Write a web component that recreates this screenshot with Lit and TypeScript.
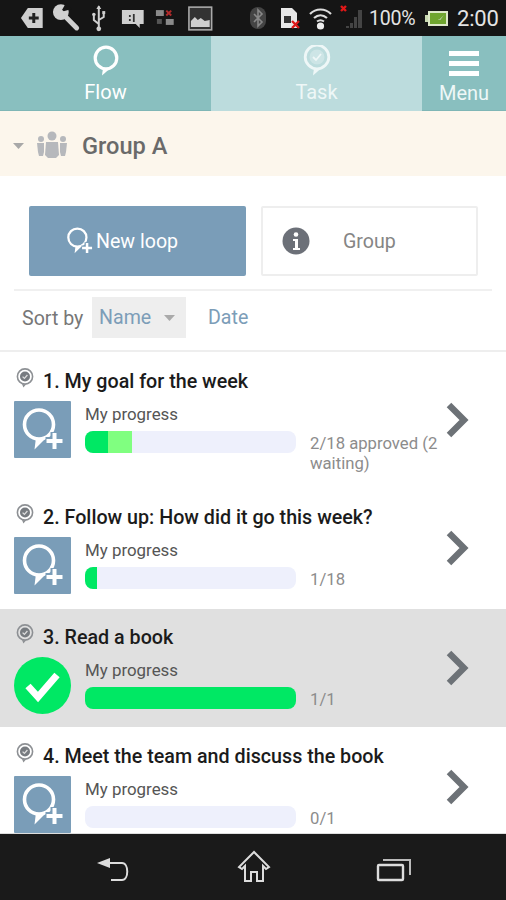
import { LitElement, html, css, svg } from "lit";
import { customElement } from "lit/decorators.js";

const bubble = svg`<circle cx="25" cy="23.500" r="14.500" fill="none" stroke="#fff" stroke-width="3.600"/><path d="M22 36.500 L31 38 L20.500 48.500 Z" fill="#fff"/>`;
const plus = svg`<path d="M40.500 31V49M31.500 40H49.500" stroke="#7a9db8" stroke-width="8"/><path d="M40.500 32V48M32.500 40H48.500" stroke="#fff" stroke-width="4"/>`;

const loopPlus = (cls: string) => html`<svg class=${cls} viewBox="7 5 46 48">${bubble}${plus}</svg>`;

const pin = html`<svg class="pin" viewBox="0 0 20 22"><circle cx="10" cy="9.5" r="7.6" fill="none" stroke="#8d9094" stroke-width="1.6"/><circle cx="10" cy="9.5" r="5" fill="#777b80"/><path d="M7.6 9.6l1.8 1.8 3-3.4" fill="none" stroke="#ddd" stroke-width="1.3"/><path d="M7 17l4 .5-2.6 3z" fill="#8d9094"/></svg>`;

const chevron = html`<svg class="chev" viewBox="0 0 24 36"><path d="M4 3 L19 18 L4 33" fill="none" stroke="#6d7277" stroke-width="6.4"/></svg>`;

interface Row { title: string; pct?: number; wait?: number; note: string; done?: boolean; cls?: string; }
const rows: Row[] = [
  { title: "1. My goal for the week", pct: 11, wait: 11.5, note: "2/18 approved (2 waiting)" },
  { title: "2. Follow up: How did it go this week?", pct: 5.6, note: "1/18" },
  { title: "3. Read a book", pct: 100, note: "1/1", done: true, cls: "sel" },
  { title: "4. Meet the team and discuss the book", pct: 0, note: "0/1", cls: "last" },
];

@customElement("app-root")
export class AppRoot extends LitElement {
  static styles = css`
    :host { display: block; width: 506px; height: 900px; font-family: Roboto, "Liberation Sans", sans-serif; background: #fff; overflow: hidden; }
    .page { display: flex; flex-direction: column; height: 900px; }
    .status { height: 36px; flex: none; background: #151515; display: flex; justify-content: space-between; align-items: center; }
    .sleft { display: flex; padding-left: 15px; }
    .sleft svg { width: 33.6px; height: 36px; display: block; }
    .sright { display: flex; align-items: center; padding-right: 8px; color: #e4e4e4; }
    .sright svg { display: block; height: 36px; width: 31px; }
    .pct { font-size: 19.6px; margin-left: 2px; width: 56px; letter-spacing: -0.3px; }
    .sright svg.batt { width: 24px; margin: 0 8px 0 0; }
    .time { font-size: 22px; width: 41px; text-align: right; letter-spacing: -0.2px; }

    .tabs { height: 75px; flex: none; display: flex; color: #fff; font-size: 20px; }
    .tab { display: flex; flex-direction: column; align-items: center; box-sizing: border-box; background: #89bfbf; border-bottom: 1px solid #7fb6b6; }
    .tab svg { display: block; }
    .flow { width: 211px; }
    .task { width: 211px; background: #bcdcdd; border-bottom-color: #bcdcdd; color: #eef7f7; }
    .menu { width: 84px; color: #eef7f7; }
    .tab .lbl { line-height: 24px; }
    .tab svg.ti { width: 32px; height: 32px; margin: 9px 0 3px; }
    .tab svg.mi { width: 30px; height: 28px; margin: 15px 0 2px; }

    .group { height: 65px; flex: none; box-sizing: border-box; padding-top: 5px; background: #fcf6ec; display: flex; align-items: center; color: #6a6a6a; font-size: 23.6px; font-weight: 500; }
    .group .caret { margin: -1px 0 0 13px; width: 11px; height: 6px; }
    .group .ppl { margin: -2px 0 0 12px; width: 32px; height: 28px; }
    .group span { margin-left: 14px; }

    .actions { flex: none; padding: 30px 28px 13px 29px; display: flex; gap: 15px; }
    .btn { box-sizing: border-box; width: 217px; height: 70px; display: flex; align-items: center; font-size: 19.6px; border-radius: 2px; }
    .new { background: #7a9db8; color: #fff; padding-left: 37px; }
    .new svg { width: 29px; height: 30px; margin-right: 1px; }
    .info { border: 2px solid #eeeeee; color: #858585; padding-left: 19px; }
    .info svg { width: 28px; height: 28px; margin-right: 33px; }
    .rule { flex: none; height: 2px; margin: 0 14px; background: #f0f0f0; }
    .sort { flex: none; height: 61px; box-sizing: border-box; padding: 6px 0 0 22px; display: flex; align-items: flex-start; font-size: 19.6px; border-bottom: 2px solid #eeeeee; color: #777; }
    .sort .by { line-height: 43px; width: 70px; }
    .chip { width: 94px; height: 41px; box-sizing: border-box; background: #eeeeee; display: flex; align-items: center; padding-left: 7px; color: #7c9db8; }
    .chip svg { width: 11px; height: 6px; margin-left: 13px; }
    .date { line-height: 41px; margin-left: 22px; color: #7c9db8; }

    .list { flex: 1; min-height: 0; overflow: hidden; padding-top: 1px; }
    .row { display: flex; align-items: center; padding: 16px 0 15px 14px; }
    .row.sel { background: #e0e0e0; padding-bottom: 13px; }
    .row.last { padding-top: 17px; }
    .content { width: 425px; }
    .title { display: flex; align-items: center; height: 24px; margin-bottom: 8px; font-size: 19.7px; font-weight: 500; color: #1b1b1b; white-space: nowrap; }
    .pin { width: 20px; height: 22px; margin: -6px 8px 0 1px; flex: none; }
    .body { display: flex; }
    .thumb { width: 57px; height: 57px; flex: none; display: block; }
    .thumb.loop { background: #7a9db8; border-radius: 1px; }
    .mid { width: 211px; margin-left: 14px; flex: none; }
    .lab { height: 26px; line-height: 26px; margin-bottom: 4px; font-size: 16.9px; color: #555; }
    .bar { height: 22px; border-radius: 8px; background: #eef0fc; display: flex; overflow: hidden; }
    .g { background: #00e864; }
    .lg { background: #80ff80; }
    .note { margin: 33px 0 0 14px; width: 130px; line-height: 20px; font-size: 16.7px; color: #8c8c8c; }
    .chev { width: 24px; height: 36px; margin: 0 0 4px 6px; flex: none; }

    .nav { flex: none; height: 67px; box-sizing: border-box; background: #1a1a1a; border-top: 1px solid #ddd; display: flex; justify-content: space-between; align-items: center; padding: 0 94px 0 96px; }
    .nav svg { width: 36px; height: 36px; display: block; }
  `;

  private statusLeft() {
    return html`<div class="sleft">
      <svg viewBox="0 0 34 36"><path d="M6 18l7-10h15v20H13z" fill="#cfcfcf"/><path d="M19 13v10M14 18h10" stroke="#222" stroke-width="3"/></svg>
      <svg viewBox="0 0 34 36"><circle cx="12" cy="12" r="8" fill="#d0d0d0"/><path d="M12 12L17 3l6 6z" fill="#151515"/><path d="M12 12L28 28" stroke="#d0d0d0" stroke-width="5" stroke-linecap="round"/></svg>
      <svg viewBox="0 0 34 36"><path d="M17 6v24M17 24l-5-4v-4M17 20l5-3v-3" fill="none" stroke="#cfcfcf" stroke-width="2"/><path d="M14.5 9L17 5l2.5 4z" fill="#cfcfcf"/><circle cx="17" cy="29" r="2.4" fill="#cfcfcf"/><circle cx="12" cy="14.5" r="1.8" fill="#cfcfcf"/><rect x="20.5" y="11" width="3" height="3" fill="#cfcfcf"/></svg>
      <svg viewBox="0 0 34 36"><path d="M6 10h22v14h-4v4l-4-4H6z" fill="#cfcfcf"/><path d="M14 15v2M14 19v2M18 14v8" stroke="#333" stroke-width="1.8"/></svg>
      <svg viewBox="0 0 34 36"><rect x="7" y="10" width="8" height="6" fill="#8a8a8a"/><rect x="17" y="19" width="8" height="6" fill="#8a8a8a"/><path d="M8 19h5v5H8z" fill="#555"/><path d="M17.500 10.500l5 5M22.500 10.500l-5 5" stroke="#b02a2a" stroke-width="2"/></svg>
      <svg viewBox="0 0 34 36"><rect x="6" y="7" width="23" height="23" fill="#333" stroke="#aaa" stroke-width="1.6"/><path d="M8 27v-6l4-4 3 3 3-2 4 3 5-1v7z" fill="#cfcfcf"/></svg>
    </div>`;
  }
  private statusRight() {
    return html`<div class="sright">
      <svg viewBox="0 0 31 36"><rect x="7" y="7" width="16" height="22" rx="8" fill="#444"/><path d="M11 14l8 8-4 4V10l4 4-8 8" fill="none" stroke="#888" stroke-width="1.6"/></svg>
      <svg viewBox="0 0 31 36"><path d="M7 8h11l5 5v15H7z" fill="#e8e8e8"/><rect x="10" y="16" width="7" height="7" fill="#333"/><path d="M18 21l7 7M25 21l-7 7" stroke="#e01818" stroke-width="2.4"/></svg>
      <svg viewBox="0 0 31 36"><path d="M5 14c6-6 15-6 21 0M9 18c4-3.500 9-3.500 13 0" fill="none" stroke="#ddd" stroke-width="2.2"/><path d="M12 21.500c2-1.500 5-1.500 7 0" fill="none" stroke="#ddd" stroke-width="2"/><circle cx="15.500" cy="26" r="3.600" fill="#eee"/></svg>
      <svg viewBox="0 0 31 36"><path d="M5 6l5 5M10 6l-5 5" stroke="#e01818" stroke-width="2.400"/><path d="M10 26h3v2h-3zM14 23h3v5h-3z" fill="#444"/><path d="M18 17h3v11h-3zM22 10h4v18h-4z" fill="#444"/></svg>
      <span class="pct">100%</span>
      <svg class="batt" viewBox="0 0 24 36"><rect x="3" y="11" width="20" height="15" fill="#dde8c8"/><rect x="5" y="13" width="16" height="11" fill="#6fa52f"/><rect x="0" y="15" width="3" height="7" fill="#c8d8b0"/><path d="M7 21l6-2 1 1 5-5-4 5-2-1z" fill="#eef"/></svg>
      <span class="time">2:00</span>
    </div>`;
  }

  private renderRow(r: Row) {
    return html`<div class="row ${r.cls ?? ""}">
      <div class="content">
        <div class="title">${pin}<span>${r.title}</span></div>
        <div class="body">
          ${r.done
            ? html`<svg class="thumb" viewBox="0 0 57 57"><circle cx="28.500" cy="28.500" r="28.500" fill="#00e864"/><path d="M14 29l10 11 19-22" fill="none" stroke="#fff" stroke-width="7"/></svg>`
            : html`<svg class="thumb loop" viewBox="0 0 57 57">${bubble}${plus}</svg>`}
          <div class="mid">
            <div class="lab">My progress</div>
            <div class="bar">
              <div class="g" style="width:${r.pct}%"></div>
              ${r.wait ? html`<div class="lg" style="width:${r.wait}%"></div>` : ""}
            </div>
          </div>
          <div class="note">${r.note}</div>
        </div>
      </div>
      ${chevron}
    </div>`;
  }

  render() {
    return html`<div class="page">
      <div class="status">${this.statusLeft()}${this.statusRight()}</div>
      <div class="tabs">
        <div class="tab flow">
          <svg class="ti" viewBox="0 0 32 32"><circle cx="16" cy="13" r="10.800" fill="none" stroke="#fff" stroke-width="3.200"/><path d="M13 23l7 .5-8 7z" fill="#fff"/></svg>
          <span class="lbl">Flow</span>
        </div>
        <div class="tab task">
          <svg class="ti" viewBox="0 0 32 32"><circle cx="16" cy="12" r="11.800" fill="none" stroke="#eef7f7" stroke-width="2.800"/><circle cx="16" cy="12" r="7.500" fill="#eef7f7" opacity=".35"/><path d="M12 12l3 3 5-6" fill="none" stroke="#eef7f7" stroke-width="1.800"/><path d="M13 23l7 .5-8 7z" fill="#eef7f7"/></svg>
          <span class="lbl">Task</span>
        </div>
        <div class="tab menu">
          <svg class="mi" viewBox="0 0 30 28"><path d="M0 2.500h30M0 12.500h30M0 22.500h30" stroke="#fff" stroke-width="5"/></svg>
          <span class="lbl">Menu</span>
        </div>
      </div>
      <div class="group">
        <svg class="caret" viewBox="0 0 11 6"><path d="M0 0h11L5.500 6z" fill="#a8a8a8"/></svg>
        <svg class="ppl" viewBox="0 0 32 28"><g fill="#b6b8bc"><circle cx="16" cy="5" r="4.500"/><path d="M10 11h12l1 13-3 3h-8l-3-3z"/><circle cx="5" cy="8" r="3"/><path d="M1 12h7v9l-1 4H3l-1-4z"/><circle cx="27" cy="8" r="3"/><path d="M24 12h7l-1 9-1 4h-4l-1-4z"/></g></svg>
        <span>Group A</span>
      </div>
      <div class="actions">
        <div class="btn new">${loopPlus("")}<span>New loop</span></div>
        <div class="btn info">
          <svg viewBox="0 0 28 28"><circle cx="14" cy="14" r="13.500" fill="#6c7078"/><circle cx="14" cy="7.500" r="2.300" fill="#fff"/><path d="M11 12h5v9h2v2h-7v-2h2v-7h-2z" fill="#fff"/></svg>
          <span>Group</span>
        </div>
      </div>
      <div class="rule"></div>
      <div class="sort">
        <span class="by">Sort by</span>
        <div class="chip"><span>Name</span><svg viewBox="0 0 11 6"><path d="M0 0h11L5.500 6z" fill="#aaa"/></svg></div>
        <span class="date">Date</span>
      </div>
      <div class="list">${rows.map((r) => this.renderRow(r))}</div>
      <div class="nav">
        <svg viewBox="0 0 36 36"><path d="M13 14h13c7 0 7 17 0 17H15" fill="none" stroke="#ddd" stroke-width="2"/><path d="M1 14l13-5v10z" fill="#ddd"/></svg>
        <svg viewBox="0 0 36 36"><path d="M18 3L3 18l3 2 3-3v15h6v-9h6v9h6V17l3 3 3-2z" fill="none" stroke="#ddd" stroke-width="2"/></svg>
        <svg viewBox="0 0 36 36"><rect x="2" y="16" width="25" height="15" rx="1" fill="none" stroke="#ddd" stroke-width="2.400"/><path d="M7 11h27v15" fill="none" stroke="#bbb" stroke-width="2"/></svg>
      </div>
    </div>`;
  }
}
